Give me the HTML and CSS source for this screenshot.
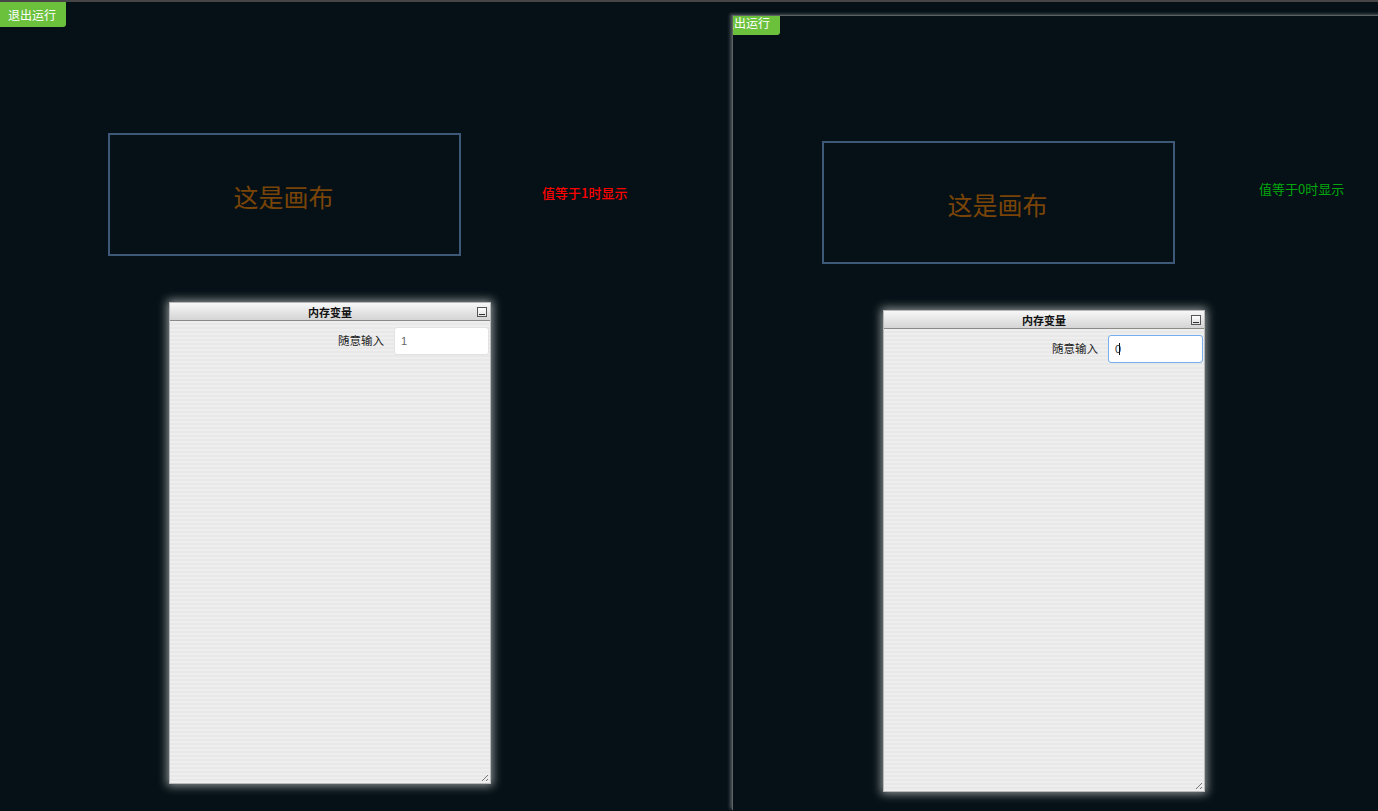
FILE: index.html
```html
<!DOCTYPE html>
<html lang="zh">
<head>
<meta charset="utf-8">
<title>运行预览</title>
<link rel="stylesheet" href="styles.css">
</head>
<body>
<div class="screen">
  <section class="pane pane-left">
    <div class="stage">
      <button class="exit-btn">退出运行</button>
      <div class="canvas-box"><span>这是画布</span></div>
      <div class="cond-text cond-red">值等于1时显示</div>
      <div class="panel">
        <div class="panel-head">
          <span class="panel-title">内存变量</span>
          <span class="min-btn"></span>
        </div>
        <div class="panel-body">
          <div class="field-row">
            <label class="field-label">随意输入</label>
            <div class="field-input">1</div>
          </div>
          <span class="grip"></span>
        </div>
      </div>
    </div>
  </section>
  <section class="pane pane-right">
    <div class="stage stage-shifted">
      <button class="exit-btn">退出运行</button>
      <div class="canvas-box"><span>这是画布</span></div>
      <div class="cond-text cond-green">值等于0时显示</div>
      <div class="panel">
        <div class="panel-head">
          <span class="panel-title">内存变量</span>
          <span class="min-btn"></span>
        </div>
        <div class="panel-body">
          <div class="field-row">
            <label class="field-label">随意输入</label>
            <div class="field-input focused">0<span class="caret"></span></div>
          </div>
          <span class="grip"></span>
        </div>
      </div>
    </div>
  </section>
</div>
</body>
</html>
```
FILE: styles.css
```css
html, body {
  margin: 0;
  padding: 0;
  height: 100%;
  overflow: hidden;
  background: #051116;
  font-family: "Noto Sans CJK SC", "Liberation Sans", sans-serif;
}

.screen {
  display: flex;
  height: 811px;
  border-top: 2px solid #464646;
  box-sizing: border-box;
}

.pane {
  position: relative;
  overflow: hidden;
  background: #051116;
}

.pane-left {
  width: 729px;
  flex: none;
}

.pane-right {
  flex: 1;
  margin-left: 4px;
  margin-top: 14px;
  overflow: visible;
  box-shadow: -1px -1px 0 #5e6465, -3px -2px 3px rgba(150, 155, 155, 0.5);
}

.stage {
  position: relative;
  width: 729px;
  height: 809px;
}

.stage-shifted {
  margin: -6px 0 0 -19px;
  clip-path: inset(6px 0 0 19px);
}

.exit-btn {
  position: absolute;
  left: 0;
  top: 0;
  width: 66px;
  height: 25px;
  padding: 0 0 0 8px;
  border: none;
  border-radius: 0 0 3px 0;
  background: #6bc13c;
  color: #ffffff;
  font-family: "Noto Sans CJK SC", "Liberation Sans", sans-serif;
  font-size: 12px;
  line-height: 25px;
  text-align: left;
  cursor: pointer;
}

.canvas-box {
  position: absolute;
  left: 108px;
  top: 131px;
  width: 353px;
  height: 123px;
  box-sizing: border-box;
  border: 2px solid #3e5877;
  display: flex;
  align-items: center;
  justify-content: center;
}

.canvas-box span {
  color: #7a4408;
  font-size: 25px;
  padding-top: 2px;
  margin-left: -2px;
}

.cond-text {
  position: absolute;
  font-size: 13px;
  line-height: 16px;
  white-space: nowrap;
}

.cond-red {
  left: 542px;
  top: 183px;
  color: #ff0000;
  font-weight: 500;
}

.cond-green {
  left: 545px;
  top: 171px;
  color: #00a80c;
}

.panel {
  position: absolute;
  left: 169px;
  top: 300px;
  width: 322px;
  height: 482px;
  box-sizing: border-box;
  border: 1px solid #b9b9b9;
  background: #ececec;
  box-shadow: 0 0 9px 2px rgba(255, 255, 255, 0.55);
  display: flex;
  flex-direction: column;
}

.panel-head {
  position: relative;
  height: 17px;
  flex: none;
  background: linear-gradient(#f7f7f7, #d4d4d4);
  border-bottom: 1px solid #8a8a8a;
  display: flex;
  align-items: center;
  justify-content: center;
}

.panel-title {
  font-size: 11px;
  font-weight: bold;
  color: #111111;
  line-height: 17px;
  margin-top: 2px;
}

.min-btn {
  position: absolute;
  right: 3px;
  top: 4px;
  width: 10px;
  height: 10px;
  box-sizing: border-box;
  border: 1px solid #555555;
  background: linear-gradient(#fdfdfd, #e2e2e2);
}

.min-btn::after {
  content: "";
  position: absolute;
  left: 1px;
  right: 1px;
  bottom: 1px;
  height: 1px;
  background: #333333;
}

.panel-body {
  position: relative;
  flex: 1;
  background: repeating-linear-gradient(#eeeeee 0 2px, #e8e8e8 2px 4px);
  padding: 6px 1px 0 0;
}

.field-row {
  display: flex;
  justify-content: flex-end;
  align-items: center;
  gap: 10px;
}

.field-label {
  font-size: 11.5px;
  color: #222222;
  margin-top: -3px;
}

.field-input {
  width: 95px;
  height: 28px;
  box-sizing: border-box;
  background: #ffffff;
  border: 1px solid #e2e2e2;
  border-radius: 3px;
  padding: 0 6px;
  font-size: 11px;
  line-height: 26px;
  color: #666666;
  font-family: "Liberation Sans", "Noto Sans CJK SC", sans-serif;
}

.field-input.focused {
  border-color: #76aef0;
  color: #333333;
}

.caret {
  display: inline-block;
  width: 1px;
  height: 12px;
  background: #111111;
  vertical-align: -2px;
  margin-left: -2px;
}

.grip {
  position: absolute;
  right: 2px;
  bottom: 2px;
  width: 9px;
  height: 9px;
  background: repeating-linear-gradient(135deg, transparent 0 2px, #777777 2px 3px);
  clip-path: polygon(100% 0, 100% 100%, 0 100%);
}
```
